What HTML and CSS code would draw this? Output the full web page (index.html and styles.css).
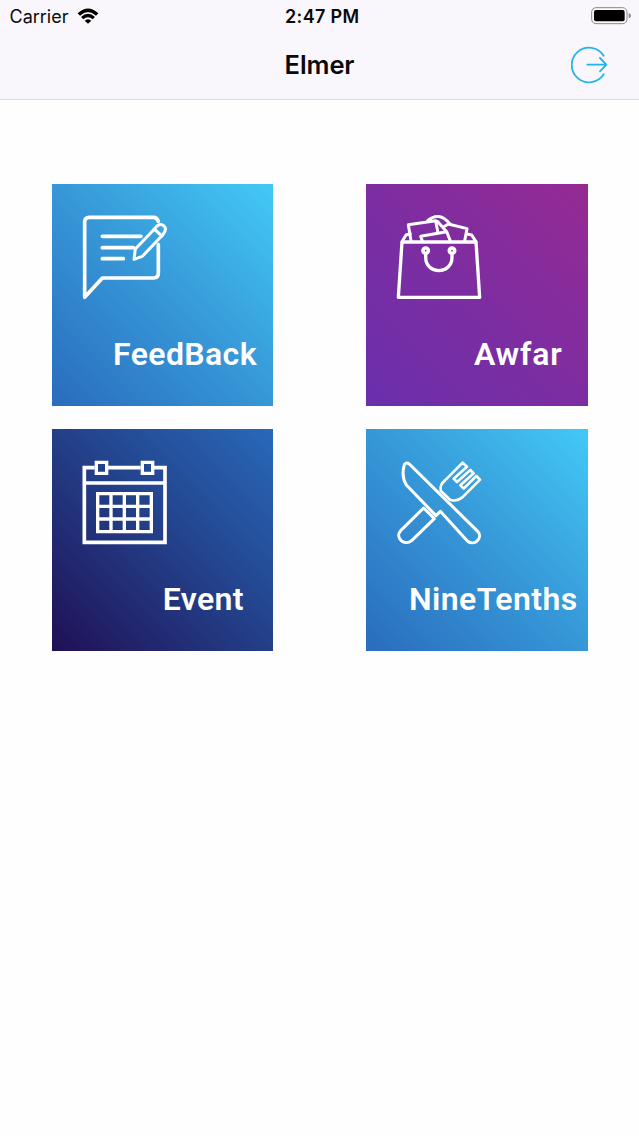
FILE: index.html
```
<!DOCTYPE html>
<html>
<head>
    <meta charset="utf-8">
    <title>Elmer</title>
    <link rel="stylesheet" href="styles.css">
</head>
<body>
    <header class="header">
        <div class="status">
            <div class="carrier">
                <span>Carrier</span>
                <svg class="wifi" viewBox="0 0 66 48">
                    <path d="M2 16Q33-13 64 16L57 23Q33 1 9 23Z"/>
                    <path d="M12 27Q33 8 54 27L47 34Q33 22 19 34Z"/>
                    <path d="M23 38Q33 29 43 38L33 47Z"/>
                </svg>
            </div>
            <div class="time">2:47 PM</div>
            <svg class="battery" viewBox="0 0 120 54">
                <rect x="2" y="2" width="106" height="48" rx="13" fill="none" stroke="#8b898d" stroke-width="3"/>
                <rect x="9" y="9" width="92" height="34" rx="6"/>
                <path d="M113 18Q120 20 120 26Q120 32 113 34Z" fill="#8b898d"/>
            </svg>
        </div>
        <div class="navbar">
            <h1>Elmer</h1>
            <button class="logout" aria-label="Log out">
                <svg viewBox="0 0 114 114">
                    <path d="M98 29A52 52 0 1 0 98 85M49 56H106M87 36L106 56L87 76"/>
                </svg>
            </button>
        </div>
    </header>

    <main class="menu">
        <a class="card feedback">
            <svg class="icon" viewBox="0 0 330 315">
                <g stroke-width="11">
                    <path d="M265 49Q261 37 251 37H58Q44 37 44 51V277L97 219H251Q265 219 265 205V119"/>
                    <path d="M97 94H213M97 128H190M97 161H160"/>
                    <path d="M192 163L196 132L254 71Q267 52 281 62Q293 73 278 90L217 154ZM252 72L276 93" stroke-width="9"/>
                </g>
            </svg>
            <span class="name">FeedBack</span>
        </a>
        <a class="card awfar">
            <svg class="icon" viewBox="0 0 330 315">
                <g stroke-width="9">
                    <path d="M51 111H273L284 277H40Z" stroke-width="10"/>
                    <path d="M51 110L63 90L76 86M273 110L260 90L246 87"/>
                    <path d="M78 108L70 59L152 47L158 79M128 47Q162 17 195 57"/>
                    <path d="M112 108L107 94L185 80L196 108M157 49L185 80M175 66L190 57L246 71L239 108"/>
                    <path d="M122 145V157C122 210 201 210 201 157V145" stroke-width="10"/>
                </g>
                <g stroke-width="11">
                    <circle cx="122" cy="137" r="8"/>
                    <circle cx="201" cy="137" r="8"/>
                </g>
            </svg>
            <span class="name">Awfar</span>
        </a>
        <a class="card event">
            <svg class="icon" viewBox="0 0 330 315">
                <g stroke-width="11" stroke-linejoin="miter" stroke-linecap="butt">
                    <path d="M74 53H43V277H285V53H252M114 53H212M43 99H285"/>
                    <path d="M79 37H110V70H79ZM217 37H248V70H217Z" stroke-width="10"/>
                    <path d="M83 131H244V245H83ZM83 169H244M83 207H244M123 131V245M163 131V245M203 131V245" stroke-width="10"/>
                </g>
            </svg>
            <span class="name">Event</span>
        </a>
        <a class="card ninetenths">
            <svg class="icon" viewBox="0 0 330 315">
                <g stroke-width="9">
                    <path d="M73 42L278 244C296 264 267 290 247 273L166 184L153 197L64 105C52 86 53 62 58 44Q64 35 73 42Z"/>
                    <path d="M116 174L148 206L80 272C58 289 29 264 47 242Z"/>
                    <path d="M167 122Q164 103 180 91L233 38L246 50L206 86L216 96L256 60L266 70L226 106L236 116L274 78L285 89L232 142Q218 155 196 150Z" stroke-width="8"/>
                </g>
            </svg>
            <span class="name">NineTenths</span>
        </a>
    </main>
</body>
</html>
```
FILE: styles.css
```
body {
    margin: 0;
    background-color: #fefefe;
    font-family: Inter, "Liberation Sans", sans-serif;
    color: #0a0a0c;
}
.header {
    box-sizing: border-box;
    height: 100px;
    background-color: #f9f7fb;
    border-bottom: 1px solid #dcdade;
}
.status {
    display: grid;
    grid-template-columns: 1fr auto 1fr;
    align-items: center;
    height: 32px;
    padding: 0 8px 0 9.5px;
    font-size: 18px;
}
.carrier {
    display: flex;
    align-items: center;
    gap: 8px;
}
.wifi {
    width: 22px;
    height: 16px;
}
.time {
    font-weight: 600;
    font-size: 18px;
    letter-spacing: 0.35px;
    margin-left: 4px;
}
.battery {
    width: 40px;
    height: 18px;
    justify-self: end;
}
.navbar {
    display: grid;
    grid-template-columns: 1fr auto 1fr;
    align-items: center;
    height: 65px;
    padding: 0 30.5px;
}
h1 {
    grid-column: 2;
    margin: 0;
    font-size: 25.5px;
    font-weight: 600;
    letter-spacing: -0.1px;
}
.logout {
    justify-self: end;
    width: 38px;
    height: 38px;
    padding: 0;
    border: none;
    background: none;
}
.logout svg {
    display: block;
    fill: none;
    stroke: #25b4ea;
    stroke-width: 5.5;
    stroke-linecap: round;
    stroke-linejoin: round;
}
.menu {
    display: grid;
    grid-template-columns: 221.5px 221.5px;
    grid-auto-rows: 222px;
    column-gap: 93px;
    row-gap: 23.5px;
    padding: 83.5px 0 0 51.5px;
}
.card {
    box-sizing: border-box;
    display: flex;
    flex-direction: column;
    justify-content: space-between;
    padding: 21px 0 33px 18.5px;
    color: white;
}
.icon {
    width: 110px;
    height: 105px;
    fill: none;
    stroke: white;
    stroke-linecap: round;
    stroke-linejoin: round;
}
.name {
    align-self: flex-end;
    font-family: Roboto, sans-serif;
    font-size: 32px;
    line-height: 38px;
    font-weight: 600;
    letter-spacing: 0.4px;
}
.feedback,
.ninetenths {
    background: linear-gradient(to top right, #2a6cbd, #3697d7 50%, #43c9f6);
}
.awfar {
    background: linear-gradient(to top right, #6a2fac, #7d2da1 50%, #962a93);
}
.event {
    background: linear-gradient(to top right, #201056, #233f88 50%, #2869b9);
}
.feedback .name {
    margin-right: 16px;
}
.awfar .name {
    letter-spacing: 0.8px;
    margin-right: 25px;
}
.event .name {
    margin-right: 29px;
}
.ninetenths .name {
    margin-right: 10px;
}
```
